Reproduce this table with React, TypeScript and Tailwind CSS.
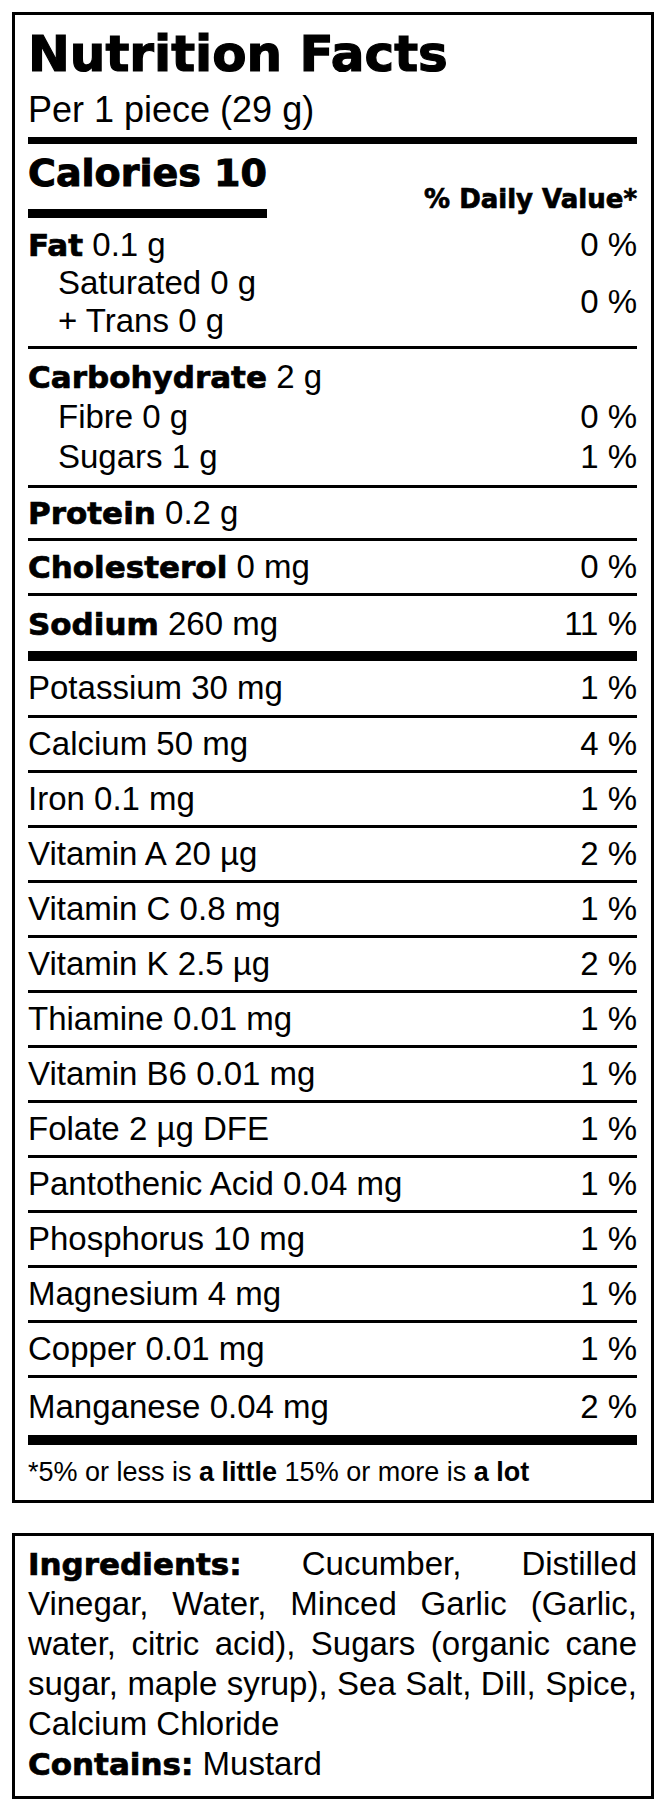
const heavy = "font-['DejaVu_Sans',sans-serif] font-bold [-webkit-text-stroke:0.7px_black]";
const label = `${heavy} text-[31px]`;

type Nutrient = { label: string; dv: string };

const minerals: Nutrient[] = [
  { label: "Calcium 50 mg", dv: "4 %" },
  { label: "Iron 0.1 mg", dv: "1 %" },
  { label: "Vitamin A 20 µg", dv: "2 %" },
  { label: "Vitamin C 0.8 mg", dv: "1 %" },
  { label: "Vitamin K 2.5 µg", dv: "2 %" },
  { label: "Thiamine 0.01 mg", dv: "1 %" },
  { label: "Vitamin B6 0.01 mg", dv: "1 %" },
  { label: "Folate 2 µg DFE", dv: "1 %" },
  { label: "Pantothenic Acid 0.04 mg", dv: "1 %" },
  { label: "Phosphorus 10 mg", dv: "1 %" },
  { label: "Magnesium 4 mg", dv: "1 %" },
  { label: "Copper 0.01 mg", dv: "1 %" },
];

function Row({ children, dv, className }: { children: React.ReactNode; dv?: string; className: string }) {
  return (
    <div className={`flex items-center justify-between border-black ${className}`}>
      <span className="leading-[38px]">{children}</span>
      {dv && <span className="leading-[38px]">{dv}</span>}
    </div>
  );
}

export default function App() {
  return (
    <div className="min-h-screen bg-white px-3 pt-3 pb-[11px] text-black font-['Liberation_Sans',Arial,sans-serif] text-[33px]">
      <div className="border-[3px] border-black pl-[13px] pr-[14px]">
        <h1 className={`${heavy} pt-[14px] text-[50px] leading-[50px] [-webkit-text-stroke:1.2px_black]`}>Nutrition Facts</h1>
        <p className="mt-[13px] text-[36px] leading-[36px]">Per 1 piece (29 g)</p>
        <div className="mt-[9px] h-[7px] bg-black" />

        <div className="flex items-end justify-between">
          <div className="w-[239px]">
            <div className={`${heavy} mt-[10px] text-[38px] leading-[38px] whitespace-nowrap [-webkit-text-stroke:1px_black]`}>Calories 10</div>
            <div className="mt-[17px] h-[9px] bg-black" />
          </div>
          <div className={`${heavy} mb-[6px] text-[26px] leading-[26px]`}>% Daily Value*</div>
        </div>

        <div className="mt-[8px] border-b-[3px] border-black pb-[6px]">
          <div className="flex h-[38px] items-center justify-between">
            <span className="leading-[38px]">
              <b className={label}>Fat</b> 0.1 g
            </span>
            <span className="leading-[38px]">0 %</span>
          </div>
          <div className="flex items-center justify-between">
            <div className="pl-[30px] leading-[38px]">
              <div>Saturated 0 g</div>
              <div>+ Trans 0 g</div>
            </div>
            <span>0 %</span>
          </div>
        </div>

        <div className="border-b-[3px] border-black pt-[8px] pb-[8px] leading-[40px]">
          <div>
            <b className={label}>Carbohydrate</b> 2 g
          </div>
          <div className="flex justify-between pl-[30px]">
            <span>Fibre 0 g</span>
            <span>0 %</span>
          </div>
          <div className="flex justify-between pl-[30px]">
            <span>Sugars 1 g</span>
            <span>1 %</span>
          </div>
        </div>

        <Row className="h-[53px] border-b-[3px]">
          <b className={label}>Protein</b> 0.2 g
        </Row>
        <Row className="h-[55px] border-b-[3px]" dv="0 %">
          <b className={label}>Cholesterol</b> 0 mg
        </Row>
        <Row className="h-[65px] border-b-[10px]" dv="11 %">
          <b className={label}>Sodium</b> 260 mg
        </Row>

        <Row className="h-[57px] border-b-[3px]" dv="1 %">
          Potassium 30 mg
        </Row>
        {minerals.map((m) => (
          <Row key={m.label} className="h-[55px] border-b-[3px]" dv={m.dv}>
            {m.label}
          </Row>
        ))}
        <Row className="h-[67px] border-b-[10px]" dv="2 %">
          Manganese 0.04 mg
        </Row>

        <p className="flex h-[55px] items-center text-[27px]">
          <span>
            *5% or less is <b className="font-bold">a little</b> 15% or more is <b className="font-bold">a lot</b>
          </span>
        </p>
      </div>

      <div className="mt-[30px] border-[3px] border-black pl-[13px] pr-[14px] pt-[8px] pb-[12px] leading-[40px]">
        <div className="whitespace-nowrap text-justify [text-align-last:justify]">
          <b className={label}>Ingredients:</b> Cucumber, Distilled
        </div>
        <div className="whitespace-nowrap text-justify [text-align-last:justify]">Vinegar, Water, Minced Garlic (Garlic,</div>
        <div className="whitespace-nowrap text-justify [text-align-last:justify]">water, citric acid), Sugars (organic cane</div>
        <div className="whitespace-nowrap text-justify [text-align-last:justify]">sugar, maple syrup), Sea Salt, Dill, Spice,</div>
        <div>Calcium Chloride</div>
        <div>
          <b className={label}>Contains:</b> Mustard
        </div>
      </div>
    </div>
  );
}
